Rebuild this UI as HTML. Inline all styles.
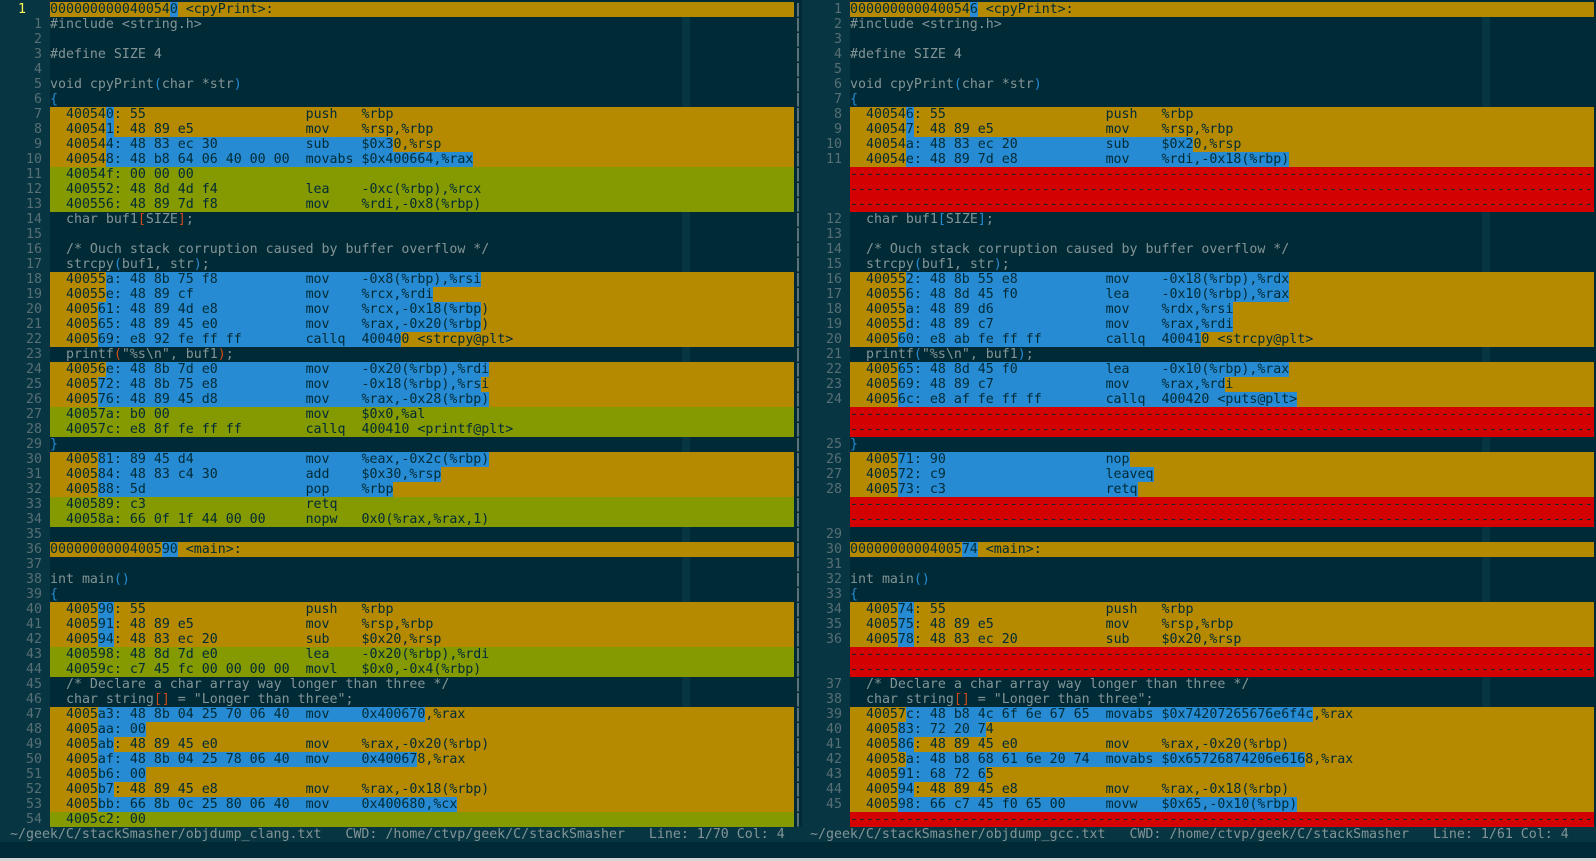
<!DOCTYPE html>
<html><head><meta charset="utf-8">
<style>
html,body{margin:0;padding:0;}
body{width:1596px;height:861px;background:#002b36;position:relative;overflow:hidden;
font-family:"DejaVu Sans Mono","Liberation Mono",monospace;font-size:13.28px;line-height:15px;color:#839496;}
.r{position:absolute;height:15px;white-space:pre;overflow:hidden;}
.c{width:744px;}
.chg{background:#b58900;color:#002b36;}
.add{background:#859900;color:#002b36;}
.del{background:#d30102;color:#002b36;}
.b{background:#268bd2;}
.cc{position:absolute;width:8px;height:15px;background:#073642;}
.num{color:#586e75;text-align:right;width:24px;}
.p{color:#268bd2}.o{color:#cb4b16}
</style></head><body>
<div style="position:absolute;left:0;top:0;width:50px;height:827px;background:#073642"></div>
<div style="position:absolute;left:802px;top:0;width:48px;height:827px;background:#073642"></div>
<div id="root"></div>
<div class="r" style="left:0;top:827px;width:1596px;background:#073642;color:#839496"></div>
<div class="r" style="left:10px;top:827px;color:#839496">~/geek/C/stackSmasher/objdump_clang.txt   CWD: /home/ctvp/geek/C/stackSmasher   Line: 1/70 Col: 4</div>
<div class="r" style="left:810px;top:827px;color:#839496">~/geek/C/stackSmasher/objdump_gcc.txt   CWD: /home/ctvp/geek/C/stackSmasher   Line: 1/61 Col: 4</div>
<div style="position:absolute;left:0;top:858px;width:1596px;height:3px;background:#d6d6d6"></div>
<script>
function esc(s){return s.replace(/&/g,'&amp;').replace(/</g,'&lt;').replace(/>/g,'&gt;');}
function pad(s,n){while(s.length<n)s+=' ';return s;}
function asm(a,h,m,o){var s='  '+a+': '+h;if(m){s=pad(s,32)+m;if(o)s=pad(s,39)+o;}return s;}
var srcL={
'inc':'#include &lt;string.h&gt;','':'','def':'#define SIZE 4',
'void':'void cpyPrint<span class="p">(</span>char *str<span class="p">)</span>',
'ob':'<span class="p">{</span>','cb':'<span class="p">}</span>',
'buf':'  char buf1<span class="o">[</span>SIZE<span class="o">]</span>;',
'bufR':'  char buf1<span class="p">[</span>SIZE<span class="p">]</span>;',
'com':'  /* Ouch stack corruption caused by buffer overflow */',
'cpy':'  strcpy<span class="p">(</span>buf1, str<span class="p">)</span>;',
'pf':'  printf<span class="o">(</span>"%s\\n", buf1<span class="o">)</span>;',
'pfR':'  printf<span class="p">(</span>"%s\\n", buf1<span class="p">)</span>;',
'im':'int main<span class="p">()</span>',
'com2':'  /* Declare a char array way longer than three */',
'str':'  char string<span class="o">[]</span> = "Longer than three";'
};
// row types: ['s',key] source; ['c',text,b0,b1] change; ['a',text] add; ['d'] delete
var L=[
['c','0000000000400540 <cpyPrint>:',15,15],['s','inc'],['s',''],['s','def'],['s',''],['s','void'],['s','ob'],
['c',asm('400540','55','push','%rbp'),7,7],
['c',asm('400541','48 89 e5','mov','%rsp,%rbp'),7,7],
['c',asm('400544','48 83 ec 30','sub','$0x30,%rsp'),7,42],
['c',asm('400548','48 b8 64 06 40 00 00','movabs','$0x400664,%rax'),7,52],
['a',asm('40054f','00 00 00')],
['a',asm('400552','48 8d 4d f4','lea','-0xc(%rbp),%rcx')],
['a',asm('400556','48 89 7d f8','mov','%rdi,-0x8(%rbp)')],
['s','buf'],['s',''],['s','com'],['s','cpy'],
['c',asm('40055a','48 8b 75 f8','mov','-0x8(%rbp),%rsi'),7,53],
['c',asm('40055e','48 89 cf','mov','%rcx,%rdi'),7,47],
['c',asm('400561','48 89 4d e8','mov','%rcx,-0x18(%rbp)'),6,53],
['c',asm('400565','48 89 45 e0','mov','%rax,-0x20(%rbp)'),6,53],
['c',asm('400569','e8 92 fe ff ff','callq','400400 <strcpy@plt>'),6,43],
['s','pf'],
['c',asm('40056e','48 8b 7d e0','mov','-0x20(%rbp),%rdi'),7,54],
['c',asm('400572','48 8b 75 e8','mov','-0x18(%rbp),%rsi'),6,53],
['c',asm('400576','48 89 45 d8','mov','%rax,-0x28(%rbp)'),6,54],
['a',asm('40057a','b0 00','mov','$0x0,%al')],
['a',asm('40057c','e8 8f fe ff ff','callq','400410 <printf@plt>')],
['s','cb'],
['c',asm('400581','89 45 d4','mov','%eax,-0x2c(%rbp)'),6,54],
['c',asm('400584','48 83 c4 30','add','$0x30,%rsp'),6,48],
['c',asm('400588','5d','pop','%rbp'),6,42],
['a',asm('400589','c3','retq')],
['a',asm('40058a','66 0f 1f 44 00 00','nopw','0x0(%rax,%rax,1)')],
['s',''],
['c','0000000000400590 <main>:',14,15],['s',''],['s','im'],['s','ob'],
['c',asm('400590','55','push','%rbp'),6,7],
['c',asm('400591','48 89 e5','mov','%rsp,%rbp'),6,7],
['c',asm('400594','48 83 ec 20','sub','$0x20,%rsp'),6,7],
['a',asm('400598','48 8d 7d e0','lea','-0x20(%rbp),%rdi')],
['a',asm('40059c','c7 45 fc 00 00 00 00','movl','$0x0,-0x4(%rbp)')],
['s','com2'],['s','str'],
['c',asm('4005a3','48 8b 04 25 70 06 40','mov','0x400670,%rax'),6,46],
['c',asm('4005aa','00'),6,11],
['c',asm('4005ab','48 89 45 e0','mov','%rax,-0x20(%rbp)'),6,7],
['c',asm('4005af','48 8b 04 25 78 06 40','mov','0x400678,%rax'),6,45],
['c',asm('4005b6','00'),6,11],
['c',asm('4005b7','48 89 45 e8','mov','%rax,-0x18(%rbp)'),6,7],
['c',asm('4005bb','66 8b 0c 25 80 06 40','mov','0x400680,%cx'),6,53],
['a',asm('4005c2','00')]
];
var R=[
['c','0000000000400546 <cpyPrint>:',15,15],['s','inc'],['s',''],['s','def'],['s',''],['s','void'],['s','ob'],
['c',asm('400546','55','push','%rbp'),7,7],
['c',asm('400547','48 89 e5','mov','%rsp,%rbp'),7,7],
['c',asm('40054a','48 83 ec 20','sub','$0x20,%rsp'),7,42],
['c',asm('40054e','48 89 7d e8','mov','%rdi,-0x18(%rbp)'),7,54],
['d'],['d'],['d'],
['s','bufR'],['s',''],['s','com'],['s','cpy'],
['c',asm('400552','48 8b 55 e8','mov','-0x18(%rbp),%rdx'),7,54],
['c',asm('400556','48 8d 45 f0','lea','-0x10(%rbp),%rax'),7,54],
['c',asm('40055a','48 89 d6','mov','%rdx,%rsi'),7,47],
['c',asm('40055d','48 89 c7','mov','%rax,%rdi'),7,47],
['c',asm('400560','e8 ab fe ff ff','callq','400410 <strcpy@plt>'),6,43],
['s','pfR'],
['c',asm('400565','48 8d 45 f0','lea','-0x10(%rbp),%rax'),6,54],
['c',asm('400569','48 89 c7','mov','%rax,%rdi'),6,46],
['c',asm('40056c','e8 af fe ff ff','callq','400420 <puts@plt>'),6,57],
['d'],['d'],
['s','cb'],
['c',asm('400571','90','nop'),6,34],
['c',asm('400572','c9','leaveq'),6,37],
['c',asm('400573','c3','retq'),6,37],
['d'],['d'],
['s',''],
['c','0000000000400574 <main>:',14,15],['s',''],['s','im'],['s','ob'],
['c',asm('400574','55','push','%rbp'),6,7],
['c',asm('400575','48 89 e5','mov','%rsp,%rbp'),6,7],
['c',asm('400578','48 83 ec 20','sub','$0x20,%rsp'),6,7],
['d'],['d'],
['s','com2'],['s','str'],
['c',asm('40057c','48 b8 4c 6f 6e 67 65','movabs','$0x74207265676e6f4c,%rax'),7,57],
['c',asm('400583','72 20 74'),6,16],
['c',asm('400586','48 89 45 e0','mov','%rax,-0x20(%rbp)'),6,7],
['c',asm('40058a','48 b8 68 61 6e 20 74','movabs','$0x65726874206e6168,%rax'),7,56],
['c',asm('400591','68 72 65'),6,16],
['c',asm('400594','48 89 45 e8','mov','%rax,-0x18(%rbp)'),6,7],
['c',asm('400598','66 c7 45 f0 65 00','movw','$0x65,-0x10(%rbp)'),6,55],
['d']
];
var h='';
function pane(rows,x0,numx,rel){
 var n=0;
 for(var i=0;i<rows.length;i++){
  var r=rows[i],top=2+i*15,cls='',inner='';
  if(r[0]=='s'){inner=srcL[r[1]];h+='<div class="cc" style="left:'+(x0+79*8)+'px;top:'+top+'px"></div>';}
  else if(r[0]=='a'){cls='add';inner=esc(r[1]);}
  else if(r[0]=='d'){cls='del';inner=new Array(94).join('-');}
  else {cls='chg';var t=r[1];inner=esc(t.slice(0,r[2]))+'<span class="b">'+esc(t.slice(r[2],r[3]+1))+'</span>'+esc(t.slice(r[3]+1));}
  h+='<div class="r c '+cls+'" style="left:'+x0+'px;top:'+top+'px">'+inner+'</div>';
  if(r[0]!='d'){
   n++;
   if(rel){
    if(i==0)h+='<div class="r" style="left:'+numx+'px;top:'+top+'px;color:#ffff54">1</div>';
    else h+='<div class="r num" style="left:'+numx+'px;top:'+top+'px">'+i+'</div>';
   } else h+='<div class="r num" style="left:'+numx+'px;top:'+top+'px">'+n+'</div>';
  }
  h+='<div class="r" style="left:794px;top:'+top+'px;width:8px;text-align:center;color:#93a1a1">|</div>';
 }
}
pane(L,50,18,true);
pane(R,850,818,false);
document.getElementById('root').innerHTML=h;
</script>
</body></html>
